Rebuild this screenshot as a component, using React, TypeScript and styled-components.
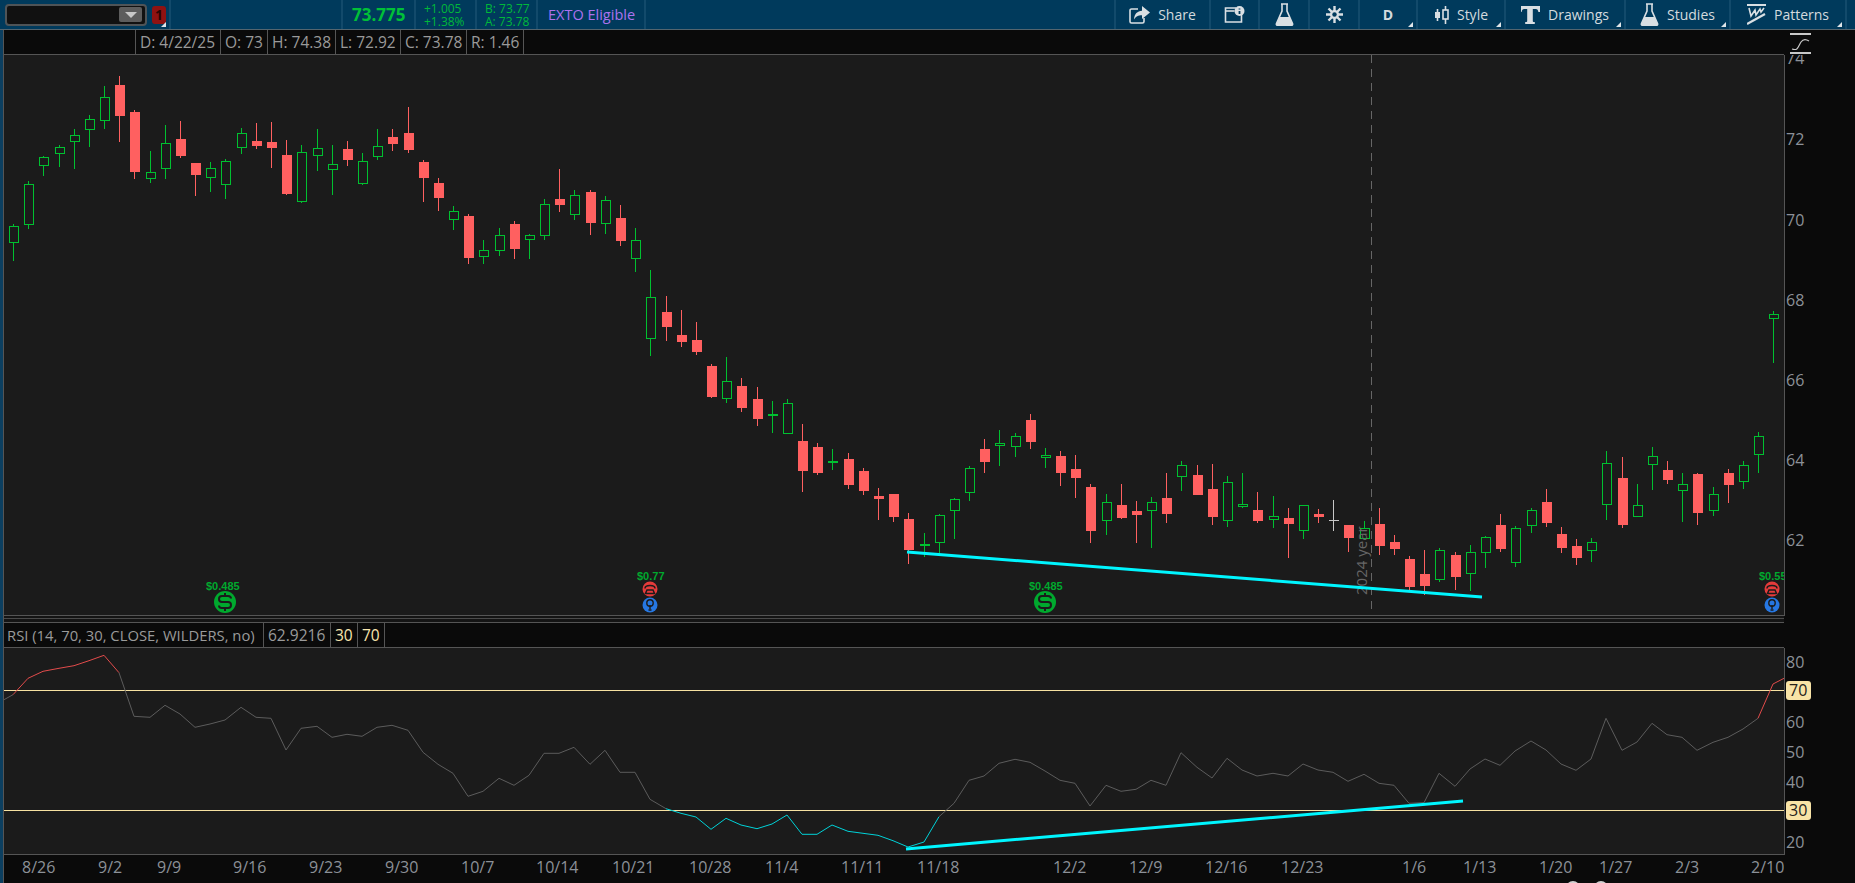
import React from 'react';
import styled, { createGlobalStyle } from 'styled-components';

const GlobalStyle = createGlobalStyle`
  html, body {
    margin: 0;
    padding: 0;
    background: #0a0a0a;
    overflow: hidden;
  }
`;

const GREEN = '#00c030';
const RED = '#ff6060';
const FONT = `'Open Sans', 'Noto Sans', sans-serif`;

// wick top, body top, body bottom, wick bottom, colour (page pixels)
type Candle = [number, number, number, number, 'g' | 'r' | 'w'];
const candles: Candle[] = [
  [224, 226, 243, 261, 'g'], [181, 184, 225, 229, 'g'], [156, 157, 166, 176, 'g'], [145, 147, 154, 167, 'g'],
  [129, 135, 142, 169, 'g'], [115, 119, 130, 147, 'g'], [86, 97, 121, 129, 'g'], [76, 85, 116, 142, 'r'],
  [110, 112, 172, 179, 'r'], [151, 172, 179, 183, 'g'], [125, 143, 169, 179, 'g'], [121, 139, 156, 158, 'r'],
  [163, 163, 175, 196, 'r'], [162, 168, 178, 192, 'g'], [159, 161, 185, 199, 'g'], [128, 133, 148, 154, 'g'],
  [123, 141, 146, 149, 'r'], [122, 142, 148, 168, 'r'], [140, 155, 194, 195, 'r'], [145, 152, 202, 203, 'g'],
  [129, 148, 156, 171, 'g'], [145, 164, 170, 195, 'g'], [141, 149, 160, 166, 'r'], [153, 161, 184, 185, 'g'],
  [129, 146, 157, 160, 'g'], [129, 137, 144, 151, 'r'], [107, 133, 150, 153, 'r'], [160, 162, 178, 202, 'r'],
  [178, 183, 198, 211, 'r'], [206, 211, 220, 230, 'g'], [214, 216, 258, 264, 'r'], [240, 250, 257, 264, 'g'],
  [228, 235, 251, 256, 'g'], [221, 224, 249, 259, 'r'], [234, 235, 240, 259, 'g'], [199, 204, 236, 240, 'g'],
  [169, 199, 205, 212, 'r'], [190, 195, 215, 220, 'g'], [190, 192, 223, 235, 'r'], [196, 200, 224, 234, 'g'],
  [205, 218, 241, 246, 'r'], [228, 240, 259, 272, 'g'], [270, 297, 339, 356, 'g'], [296, 312, 327, 341, 'r'],
  [310, 335, 342, 347, 'r'], [322, 340, 352, 355, 'r'], [364, 366, 397, 398, 'r'], [357, 381, 399, 403, 'g'],
  [378, 386, 408, 412, 'r'], [387, 399, 419, 426, 'r'], [401, 414, 416, 433, 'g'], [399, 403, 434, 434, 'g'],
  [424, 441, 471, 492, 'r'], [443, 447, 473, 475, 'r'], [449, 461, 463, 470, 'g'], [453, 459, 485, 489, 'r'],
  [468, 471, 491, 495, 'r'], [488, 496, 499, 520, 'r'], [494, 494, 517, 522, 'r'], [513, 519, 550, 564, 'r'],
  [533, 544, 546, 557, 'g'], [514, 515, 543, 553, 'g'], [498, 499, 511, 539, 'g'], [466, 468, 493, 501, 'g'],
  [439, 449, 462, 473, 'r'], [430, 443, 446, 466, 'g'], [433, 436, 447, 457, 'g'], [414, 420, 442, 449, 'r'],
  [448, 455, 458, 468, 'g'], [451, 456, 473, 486, 'r'], [455, 469, 478, 498, 'r'], [484, 487, 531, 543, 'r'],
  [494, 502, 521, 535, 'g'], [484, 505, 518, 519, 'r'], [501, 511, 515, 543, 'r'], [497, 502, 511, 548, 'g'],
  [473, 498, 514, 523, 'r'], [461, 465, 477, 491, 'g'], [465, 475, 495, 495, 'r'], [464, 489, 517, 525, 'r'],
  [476, 482, 521, 527, 'g'], [473, 504, 507, 508, 'g'], [492, 510, 521, 523, 'r'], [496, 516, 520, 528, 'g'],
  [508, 518, 524, 558, 'r'], [505, 505, 531, 539, 'g'], [509, 514, 517, 523, 'r'], [500, 520, 520, 531, 'w'],
  [525, 525, 538, 552, 'r'], [521, 528, 539, 539, 'g'], [508, 524, 546, 555, 'r'], [535, 542, 549, 555, 'r'],
  [556, 559, 587, 590, 'r'], [550, 574, 586, 595, 'r'], [548, 550, 580, 582, 'g'], [552, 555, 577, 590, 'r'],
  [545, 552, 574, 591, 'g'], [536, 537, 553, 568, 'g'], [514, 525, 549, 552, 'r'], [526, 528, 563, 567, 'g'],
  [508, 510, 526, 533, 'g'], [489, 502, 523, 527, 'r'], [527, 534, 548, 553, 'r'], [539, 546, 558, 565, 'r'],
  [538, 542, 551, 562, 'g'], [451, 463, 505, 520, 'g'], [457, 478, 525, 528, 'r'], [484, 505, 517, 517, 'g'],
  [447, 456, 465, 490, 'g'], [461, 470, 480, 484, 'r'], [473, 484, 491, 522, 'g'], [473, 474, 513, 525, 'r'],
  [487, 494, 511, 516, 'g'], [469, 473, 485, 503, 'r'], [461, 465, 482, 489, 'g'], [432, 436, 455, 473, 'g'],
  [311, 314, 319, 363, 'g'],
];

// page y of the study line at each bar
const rsi = [
  694.7, 678.3, 671.3, 668.3, 665.7, 660.7, 655.3, 672.7, 716.3, 717.3, 705.3, 714, 727.3, 724, 720, 707.3,
  717.3, 718.3, 750, 728.3, 726.3, 737.3, 734.3, 736.3, 727.3, 725.3, 730.3, 752.3, 764.3, 773.3, 796.3, 791.3,
  778.3, 785.3, 775.3, 753.3, 753.3, 747.3, 764.3, 750.3, 772.3, 772.3, 799.3, 808.7, 813.3, 817, 829.3, 818.3,
  825, 828.7, 824, 815, 834.3, 834.3, 825, 831.3, 833.3, 835.3, 840.7, 847, 842, 816.7, 803.3, 780.3, 776, 763.3,
  759.3, 762.3, 771, 780.3, 783.3, 806, 785.3, 791.3, 789.3, 780.3, 785.3, 752.7, 767.3, 778, 758.3, 770, 776,
  773.3, 776, 764, 770, 772.3, 781.3, 774.3, 783.3, 785.3, 803.3, 802.7, 773.3, 786.3, 769, 759, 765.3, 751, 741,
  750, 764, 770.3, 759, 718.3, 750.3, 742, 723.3, 734.7, 737.3, 750.3, 742.3, 737.3, 729, 718.3, 684, 678.3,
];

const barX = (i: number) => Math.round(13 + 15.175 * i);

const dateLabels: [string, number][] = [
  ['8/26', 22], ['9/2', 98], ['9/9', 157], ['9/16', 233], ['9/23', 309], ['9/30', 385], ['10/7', 461],
  ['10/14', 536], ['10/21', 612], ['10/28', 689], ['11/4', 765], ['11/11', 841], ['11/18', 917], ['12/2', 1053],
  ['12/9', 1129], ['12/16', 1205], ['12/23', 1281], ['1/6', 1402], ['1/13', 1463], ['1/20', 1539], ['1/27', 1599],
  ['2/3', 1675], ['2/10', 1751],
];

const Page = styled.div`
  width: 1855px;
  height: 883px;
  display: flex;
  flex-direction: column;
  overflow: hidden;
  font-family: ${FONT};
  background: #0a0a0a;
`;

const TopBar = styled.header`
  height: 29px;
  flex: none;
  display: flex;
  background: #003a5c;
  border-bottom: 1px solid #53656f;
`;

const Cell = styled.div<{ $w: number }>`
  position: relative;
  width: ${(p) => p.$w}px;
  flex: none;
  box-sizing: border-box;
  display: flex;
  align-items: center;
  border-right: 2px solid #124a6b;
`;

const FillCell = styled.div`
  flex: 1;
  border-right: 2px solid #124a6b;
`;

const ToolCell = styled(Cell)`
  justify-content: center;
  gap: 8px;
  color: #d4dadf;
  font-size: 14px;
`;

const Corner = styled.span`
  position: absolute;
  right: 3px;
  bottom: 2px;
  width: 0;
  height: 0;
  border-left: 5px solid transparent;
  border-bottom: 5px solid #dfe5e9;
`;

const EndGap = styled.div`
  width: 8px;
  flex: none;
`;

const SymbolBox = styled.div`
  width: 142px;
  height: 22px;
  margin-left: 5px;
  box-sizing: border-box;
  display: flex;
  align-items: center;
  justify-content: flex-end;
  padding-right: 3px;
  background: #111;
  border: 2px solid #4f5457;
  border-radius: 4px;
`;

const SymbolArrow = styled.div`
  width: 23px;
  height: 15px;
  display: flex;
  align-items: center;
  justify-content: center;
  background: #5d5d5d;
  border-radius: 2px;

  &::after {
    content: '';
    border-left: 6px solid transparent;
    border-right: 6px solid transparent;
    border-top: 6px solid #c8c8c8;
  }
`;

const AlertBadge = styled.div`
  width: 14px;
  height: 18px;
  margin-left: 5px;
  background: #8f1212;
  border-radius: 3px;
  color: #2a0505;
  font-size: 14px;
  font-weight: 700;
  line-height: 18px;
  text-align: center;
`;

const LastPrice = styled.span`
  margin-left: 9px;
  color: #00c038;
  font-size: 17px;
  font-weight: 700;
`;

const QuoteLines = styled.div`
  margin-left: 8px;
  color: #00b83a;
  font-size: 12px;
  line-height: 13px;
`;

const ExtoLabel = styled.span`
  margin-left: 10px;
  color: #ac72ee;
  font-size: 14.5px;
`;

const Workspace = styled.div`
  flex: 1;
  display: flex;
  flex-direction: column;
  padding-left: 3px;
  background: #0c3f60;
`;

const Row = styled.div`
  display: flex;
  flex: none;
`;

const Main = styled.div`
  width: 1781px;
  flex: none;
  box-sizing: border-box;
  background: #0a0a0a;
  border-left: 1px solid #555;
`;

const Axis = styled.div`
  width: 71px;
  flex: none;
  box-sizing: border-box;
  background: #0a0a0a;
  border-left: 1px solid #555;
`;

const PlainAxis = styled(Axis)`
  border-left-color: #0a0a0a;
`;

const InfoStrip = styled(Main)`
  height: 25px;
  display: flex;
  padding-left: 131px;
  border-bottom: 1px solid #555;
`;

const RsiStrip = styled(Main)`
  height: 26px;
  display: flex;
  border-top: 1px solid #555;
  border-bottom: 1px solid #555;
`;

const InfoCell = styled.div<{ $w: number; $cream?: boolean }>`
  width: ${(p) => p.$w}px;
  flex: none;
  box-sizing: border-box;
  padding-left: 4px;
  border-right: 1px solid #555;
  color: ${(p) => (p.$cream ? '#f8e6ae' : '#9a9a9a')};
  font-size: 15.5px;
  line-height: 24px;
  white-space: nowrap;
`;

const FirstInfoCell = styled(InfoCell)`
  border-left: 1px solid #555;
`;

const StudyName = styled(InfoCell)`
  padding-left: 3px;
  font-size: 14.8px;
`;

const PlotBox = styled(Main)`
  background: #1b1b1b;
  border-bottom: 1px solid #555;
`;

const PlotSvg = styled.svg`
  display: block;
`;

const Divider = styled(Main)`
  height: 6px;
  padding-top: 2px;
  background: #141414;
`;

const Hairline = styled.div`
  height: 1px;
  background: #4a4a4a;
`;

const DateBox = styled(Main)`
  height: 28px;
`;

const AxisLabel = styled.text`
  fill: #8c9198;
  font-family: ${FONT};
  font-size: 16px;
`;

const LevelLabel = styled(AxisLabel)`
  fill: #24211a;
`;

const LevelBadge = styled.rect`
  fill: #f8e3a6;
`;

const Wick = styled.line<{ $c: string }>`
  stroke: ${(p) => p.$c};
  stroke-width: 1;
  shape-rendering: crispEdges;
`;

const FilledBody = styled.rect<{ $c: string }>`
  fill: ${(p) => p.$c};
  shape-rendering: crispEdges;
`;

const HollowBody = styled.rect<{ $c: string }>`
  fill: #1b1b1b;
  stroke: ${(p) => p.$c};
  stroke-width: 1;
  shape-rendering: crispEdges;
`;

const TrendLine = styled.line`
  stroke: #00f6ff;
  stroke-width: 3;
`;

const YearLine = styled.line`
  stroke: #666;
  stroke-width: 1;
  stroke-dasharray: 8 6;
  shape-rendering: crispEdges;
`;

const YearText = styled.text`
  fill: #666;
  font-family: ${FONT};
  font-size: 15px;
`;

const EventText = styled.text`
  fill: #00a92e;
  font-family: 'Liberation Sans', sans-serif;
  font-size: 11px;
  font-weight: 700;
`;

const LevelLine = styled.line`
  stroke: #f7e2a2;
  stroke-width: 1;
  shape-rendering: crispEdges;
`;

const StudySegment = styled.line<{ $c: string }>`
  stroke: ${(p) => p.$c};
  stroke-width: 1;
`;

const IconSvg = styled.svg`
  display: block;
  flex: none;
  fill: none;
  stroke: #d9dfe3;
  stroke-width: 1.6;
`;

const ShareIcon = () => (
  <IconSvg width="21" height="18" viewBox="0 0 21 18">
    <path d="M9 3H2.5A1.5 1.5 0 0 0 1 4.5v11A1.5 1.5 0 0 0 2.5 17h11a1.5 1.5 0 0 0 1.5-1.5V12" />
    <path fill="#d9dfe3" stroke="none" d="M13 0l8 6.5L13 13V9.2c-4 0-6 1-8 4.3 .4-5.6 3.4-8.6 8-8.8z" />
  </IconSvg>
);

const NotesIcon = () => (
  <IconSvg width="21" height="17" viewBox="0 0 21 17">
    <path d="M12 2H1.5v14h16V9" />
    <path d="M1.5 5h9" />
    <circle cx="15.5" cy="5" r="5" fill="#d9dfe3" stroke="none" />
    <path d="M15.5 2.5v1M15.5 5v3" stroke="#003a5c" strokeWidth="1.8" />
  </IconSvg>
);

const FlaskIcon = () => (
  <IconSvg width="19" height="23" viewBox="0 0 19 23">
    <path d="M6 1h7M7 1v7L1.5 20.5c-.4 1 .2 1.8 1 1.8h14c.8 0 1.4-.8 1-1.8L12 8V1" />
    <path fill="#d9dfe3" stroke="none" d="M4.4 14h10.2l3 6.6c.4 1-.2 1.9-1 1.9h-14c-.8 0-1.4-.9-1-1.9z" />
  </IconSvg>
);

const GearIcon = () => (
  <IconSvg width="19" height="17" viewBox="0 0 19 17">
    <path stroke="#d9dfe3" strokeWidth="2.4" d="M9.5 0v17M1 8.5h17M3.5 2.5l12 12M15.5 2.5l-12 12" />
    <circle cx="9.5" cy="8.5" r="4.6" fill="#d9dfe3" stroke="none" />
    <circle cx="9.5" cy="8.5" r="2.2" fill="#003a5c" stroke="none" />
  </IconSvg>
);

const CandleIcon = () => (
  <IconSvg width="15" height="18" viewBox="0 0 15 18">
    <path d="M3.5 3v12M11.5 0v18" />
    <rect x="1" y="6" width="5" height="6" fill="#d9dfe3" stroke="none" />
    <rect x="9" y="4" width="5" height="9" fill="#003a5c" />
  </IconSvg>
);

const DrawingIcon = () => (
  <IconSvg width="19" height="18" viewBox="0 0 19 18">
    <path
      fill="#d9dfe3"
      stroke="none"
      d="M0 0h19v6h-1.6c-.3-2-1-3-2.6-3h-3v12c0 .7.4 1 1.2 1h.8v2H4.2v-2H5c.8 0 1.2-.3 1.2-1V3h-3C1.6 3 .9 4 .6 6H0z"
    />
  </IconSvg>
);

const PatternsIcon = () => (
  <IconSvg width="19" height="21" viewBox="0 0 19 21">
    <path strokeWidth="2" d="M0 1h19" />
    <path d="M2 4l2 8 4-6 1 5 4-6 1 3 3-4" />
    <path strokeWidth="2.2" d="M0 20l18-10" />
  </IconSvg>
);

const StudyScaleIcon = () => (
  <IconSvg width="22" height="21" viewBox="0 0 22 21">
    <path strokeWidth="2" stroke="#c8c8c8" d="M0 1h21M0 20h21" />
    <path stroke="#c8c8c8" strokeWidth="1.2" d="M2 16c6 2 6-2 9-7 2-3 5-3 8-1" />
  </IconSvg>
);

const AxisCorner = styled.div`
  height: 25px;
  padding: 3px 0 0 5px;
  box-sizing: border-box;
`;

const DollarMarker = ({ x, textX }: { x: number; textX: number }) => (
  <g>
    <EventText x={textX} y={590}>$0.485</EventText>
    <circle cx={x} cy={602} r={11} fill="#00a92e" />
    <path
      d={`M${x + 6} 598.5q0-2.5-3-2.5h-6q-3 0-3 3t3 3h6q3 0 3 3t-3 3h-6q-3 0-3-2.5M${x} 593v3M${x} 608v3`}
      fill="none"
      stroke="#1b1b1b"
      strokeWidth="2"
    />
  </g>
);

const EarningsMarker = ({ x, label }: { x: number; label: string }) => (
  <g>
    <EventText x={x - 13} y={580}>{label}</EventText>
    <circle cx={x} cy={589} r={7.5} fill="#e53b3b" />
    <path
      d={`M${x - 5} 588.5c0-4 10-4 10 0M${x - 3} 590h6l1.5 3.5h-9z`}
      fill="none"
      stroke="#1b1b1b"
      strokeWidth="1.5"
    />
    <circle cx={x} cy={605} r={7.5} fill="#2677e2" />
    <circle cx={x} cy={603} r={3.2} fill="none" stroke="#1b1b1b" strokeWidth="1.4" />
    <path d={`M${x} 605v4M${x - 1.5} 610h3`} stroke="#1b1b1b" strokeWidth="1.4" />
  </g>
);

const CandleMark = ({ c, i }: { c: Candle; i: number }) => {
  const [wickTop, top, bottom, wickBottom, kind] = c;
  const x = barX(i);
  const color = kind === 'g' ? GREEN : kind === 'r' ? RED : '#c8c8c8';
  return (
    <g>
      <Wick $c={color} x1={x + 0.5} x2={x + 0.5} y1={wickTop} y2={wickBottom} />
      {kind === 'r' ? (
        <FilledBody $c={color} x={x - 4} y={top} width={10} height={bottom - top} />
      ) : kind === 'w' ? (
        <Wick $c={color} x1={x - 4} x2={x + 6} y1={top + 0.5} y2={top + 0.5} />
      ) : (
        <HollowBody $c={color} x={x - 3.5} y={top + 0.5} width={9} height={bottom - top - 1} />
      )}
    </g>
  );
};

const studyColor = (y: number) => (y < 690 ? '#e24b4b' : y > 810 ? '#00d2d8' : '#5c5c5c');

const App: React.FC = () => {
  return (
    <Page>
      <GlobalStyle />
      <TopBar>
        <Cell $w={171}>
          <SymbolBox>
            <SymbolArrow />
          </SymbolBox>
          <AlertBadge>1</AlertBadge>
          <Corner />
        </Cell>
        <Cell $w={172} />
        <Cell $w={73}>
          <LastPrice>73.775</LastPrice>
        </Cell>
        <Cell $w={61}>
          <QuoteLines>
            +1.005
            <br />
            +1.38%
          </QuoteLines>
        </Cell>
        <Cell $w={61}>
          <QuoteLines>
            B: 73.77
            <br />
            A: 73.78
          </QuoteLines>
        </Cell>
        <Cell $w={108}>
          <ExtoLabel>EXTO Eligible</ExtoLabel>
        </Cell>
        <FillCell />
        <ToolCell $w={95}>
          <ShareIcon />
          Share
        </ToolCell>
        <ToolCell $w={49}>
          <NotesIcon />
        </ToolCell>
        <ToolCell $w={50}>
          <FlaskIcon />
        </ToolCell>
        <ToolCell $w={50}>
          <GearIcon />
        </ToolCell>
        <ToolCell $w={58}>
          <b>D</b>
          <Corner />
        </ToolCell>
        <ToolCell $w={88}>
          <CandleIcon />
          Style
          <Corner />
        </ToolCell>
        <ToolCell $w={120}>
          <DrawingIcon />
          Drawings
          <Corner />
        </ToolCell>
        <ToolCell $w={105}>
          <FlaskIcon />
          Studies
          <Corner />
        </ToolCell>
        <ToolCell $w={116}>
          <PatternsIcon />
          Patterns
          <Corner />
        </ToolCell>
        <EndGap />
      </TopBar>

      <Workspace>
        <Row>
          <InfoStrip>
            <FirstInfoCell $w={86}>D: 4/22/25</FirstInfoCell>
            <InfoCell $w={47}>O: 73</InfoCell>
            <InfoCell $w={68}>H: 74.38</InfoCell>
            <InfoCell $w={65}>L: 72.92</InfoCell>
            <InfoCell $w={66}>C: 73.78</InfoCell>
            <InfoCell $w={57}>R: 1.46</InfoCell>
          </InfoStrip>
          <PlainAxis>
            <AxisCorner>
              <StudyScaleIcon />
            </AxisCorner>
          </PlainAxis>
        </Row>

        <Row>
          <PlotBox>
            <PlotSvg width={1780} height={560} viewBox="4 55 1780 560">
              <YearLine x1={1371.5} x2={1371.5} y1={55} y2={612} />
              {candles.map((c, i) => (
                <CandleMark key={i} c={c} i={i} />
              ))}
              <YearText transform="translate(1367 595) rotate(-90)">2024 year</YearText>
              <TrendLine x1={907} y1={552} x2={1482} y2={597} />
              <DollarMarker x={225} textX={206} />
              <DollarMarker x={1045} textX={1029} />
              <EarningsMarker x={650} label="$0.77" />
              <EarningsMarker x={1772} label="$0.55" />
            </PlotSvg>
          </PlotBox>
          <Axis>
            <PlotSvg width={70} height={561} viewBox="1785 55 70 561">
              {[
                [74, 64],
                [72, 145],
                [70, 226],
                [68, 306],
                [66, 386],
                [64, 466],
                [62, 546],
              ].map(([label, y]) => (
                <AxisLabel key={label} x={1786} y={y}>
                  {label}
                </AxisLabel>
              ))}
            </PlotSvg>
          </Axis>
        </Row>

        <Row>
          <Divider>
            <Hairline />
          </Divider>
          <PlainAxis />
        </Row>

        <Row>
          <RsiStrip>
            <StudyName $w={260}>RSI (14, 70, 30, CLOSE, WILDERS, no)</StudyName>
            <InfoCell $w={67}>62.9216</InfoCell>
            <InfoCell $w={27} $cream>30</InfoCell>
            <InfoCell $w={27} $cream>70</InfoCell>
          </RsiStrip>
          <PlainAxis />
        </Row>

        <Row>
          <PlotBox>
            <PlotSvg width={1780} height={206} viewBox="4 648 1780 206">
              <LevelLine x1={4} x2={1784} y1={690.5} y2={690.5} />
              <LevelLine x1={4} x2={1784} y1={810.5} y2={810.5} />
              <StudySegment $c={studyColor(rsi[0])} x1={4} y1={699.7} x2={barX(0)} y2={rsi[0]} />
              {rsi.slice(1).map((y, i) => {
                const x2 = i + 1 === 117 ? 1784 : barX(i + 1);
                return <StudySegment key={i} $c={studyColor(y)} x1={barX(i)} y1={rsi[i]} x2={x2} y2={y} />;
              })}
              <TrendLine x1={906} y1={849} x2={1463} y2={801} />
            </PlotSvg>
          </PlotBox>
          <Axis>
            <PlotSvg width={70} height={207} viewBox="1785 648 70 207">
              {[
                [80, 668],
                [60, 728],
                [50, 758],
                [40, 788],
                [20, 848],
              ].map(([label, y]) => (
                <AxisLabel key={label} x={1786} y={y}>
                  {label}
                </AxisLabel>
              ))}
              <LevelBadge x={1786} y={681} width={25} height={19} rx={3} />
              <LevelLabel x={1789} y={696}>70</LevelLabel>
              <LevelBadge x={1786} y={801} width={25} height={19} rx={3} />
              <LevelLabel x={1789} y={816}>30</LevelLabel>
            </PlotSvg>
          </Axis>
        </Row>

        <Row>
          <DateBox>
            <PlotSvg width={1780} height={28} viewBox="4 855 1780 28">
              {dateLabels.map(([label, x]) => (
                <AxisLabel key={label} x={x} y={873}>
                  {label}
                </AxisLabel>
              ))}
              <circle cx={1573} cy={888} r={7} fill="#cfcfcf" />
              <circle cx={1601} cy={888} r={7} fill="#cfcfcf" />
            </PlotSvg>
          </DateBox>
          <PlainAxis />
        </Row>
      </Workspace>
    </Page>
  );
};

export default App;
